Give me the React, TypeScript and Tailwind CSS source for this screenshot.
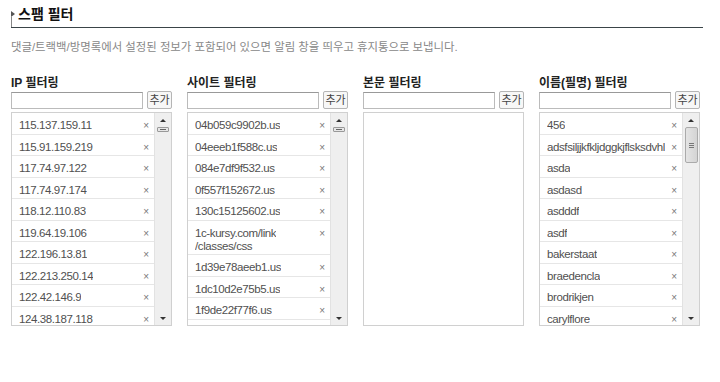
import React from "react";

const font = { fontFamily: '"Liberation Sans", "Noto Sans CJK KR", sans-serif' };

type Col = { title: string; items: string[]; thumb?: "small" | "big" };

const columns: Col[] = [
  {
    title: "IP 필터링",
    thumb: "small",
    items: [
      "115.137.159.11",
      "115.91.159.219",
      "117.74.97.122",
      "117.74.97.174",
      "118.12.110.83",
      "119.64.19.106",
      "122.196.13.81",
      "122.213.250.14",
      "122.42.146.9",
      "124.38.187.118",
    ],
  },
  {
    title: "사이트 필터링",
    thumb: "small",
    items: [
      "04b059c9902b.us",
      "04eeeb1f588c.us",
      "084e7df9f532.us",
      "0f557f152672.us",
      "130c15125602.us",
      "1c-kursy.com/link\n/classes/css",
      "1d39e78aeeb1.us",
      "1dc10d2e75b5.us",
      "1f9de22f77f6.us",
    ],
  },
  { title: "본문 필터링", items: [] },
  {
    title: "이름(필명) 필터링",
    thumb: "big",
    items: [
      "456",
      "adsfsiljjkfkljdggkjflsksdvhl",
      "asda",
      "asdasd",
      "asdddf",
      "asdf",
      "bakerstaat",
      "braedencla",
      "brodrikjen",
      "carylflore",
    ],
  },
];

function Scrollbar({ thumb }: { thumb: "small" | "big" }) {
  return (
    <div className="w-[17px] shrink-0 bg-[#efefef] border-l border-[#e2e2e2] flex flex-col items-center">
      <div className="h-[14px] w-full flex items-center justify-center">
        <span className="w-0 h-0 border-x-[3px] border-x-transparent border-b-[3px] border-b-[#333]" />
      </div>
      {thumb === "small" ? (
        <div className="w-[12px] h-[5px] border border-[#999] rounded-[1px] bg-[#e6e6e6] flex items-center justify-center">
          <div className="w-[6px] h-px bg-[#666]" />
        </div>
      ) : (
        <div className="w-[13px] h-[36px] border border-[#aaa] rounded-[2px] bg-gradient-to-r from-[#e4e4e4] to-[#d4d4d4] flex flex-col items-center justify-center gap-px">
          <div className="w-[5px] h-px bg-[#777]" />
          <div className="w-[5px] h-px bg-[#777]" />
          <div className="w-[5px] h-px bg-[#777]" />
        </div>
      )}
      <div className="flex-1" />
      <div className="h-[14px] w-full flex items-center justify-center">
        <span className="w-0 h-0 border-x-[3px] border-x-transparent border-t-[3px] border-t-[#333]" />
      </div>
    </div>
  );
}

function FilterColumn({ col }: { col: Col }) {
  return (
    <div className="w-[161px] flex flex-col">
      <div className="text-[12px] font-bold text-[#222] h-[16px] leading-[16px]">{col.title}</div>
      <div className="flex items-center gap-[4px]">
        <div className="w-[132px] h-[17px] border border-[#bbb] border-t-[#999] bg-white" />
        <button className="w-[25px] h-[18px] border border-[#b5b5b5] rounded-[2px] bg-[#f7f7f7] text-[11px] text-[#444] leading-none">
          추가
        </button>
      </div>
      <div className="mt-[3px] h-[214px] border border-[#d0d0d0] bg-white flex overflow-hidden">
        <div className="flex-1 min-w-0">
          {col.items.map((it) => (
            <div
              key={it}
              className="flex items-start justify-between border-b border-[#e6e6e6] pl-[7px] pr-[5px] pt-[6px] pb-[1.5px] text-[11.5px] leading-[13px] text-[#505050]"
            >
              <span className="whitespace-pre overflow-hidden min-w-0 tracking-[-0.4px]">{it}</span>
              <span className="text-[10px] text-[#777] leading-[13px] shrink-0 pl-[4px]">×</span>
            </div>
          ))}
        </div>
        {col.thumb && <Scrollbar thumb={col.thumb} />}
      </div>
    </div>
  );
}

export default function App() {
  return (
    <div className="w-[720px] h-[382px] bg-white" style={font}>
      <div className="pl-[11px] pr-[17px] pt-[6px]">
        <div className="flex items-end h-[22px] border-b border-[#3a4448]">
          <div className="self-stretch flex items-start pt-[5px]">
            <span className="w-0 h-0 border-y-[3px] border-y-transparent border-l-[4px] border-l-[#555]" />
          </div>
          <div className="self-stretch border-l border-[#888] ml-[-4px] mt-[11px]" />
          <span className="text-[14px] font-bold text-[#111] ml-[6px] mb-[6px] leading-none">스팸 필터</span>
        </div>
      </div>
      <div className="px-[11px] mt-[12px] text-[11.4px] text-[#888] leading-[14px]">
        댓글/트랙백/방명록에서 설정된 정보가 포함되어 있으면 알림 창을 띄우고 휴지통으로 보냅니다.
      </div>
      <div className="px-[11px] mt-[21px] flex gap-[15px]">
        {columns.map((c) => (
          <FilterColumn key={c.title} col={c} />
        ))}
      </div>
    </div>
  );
}
